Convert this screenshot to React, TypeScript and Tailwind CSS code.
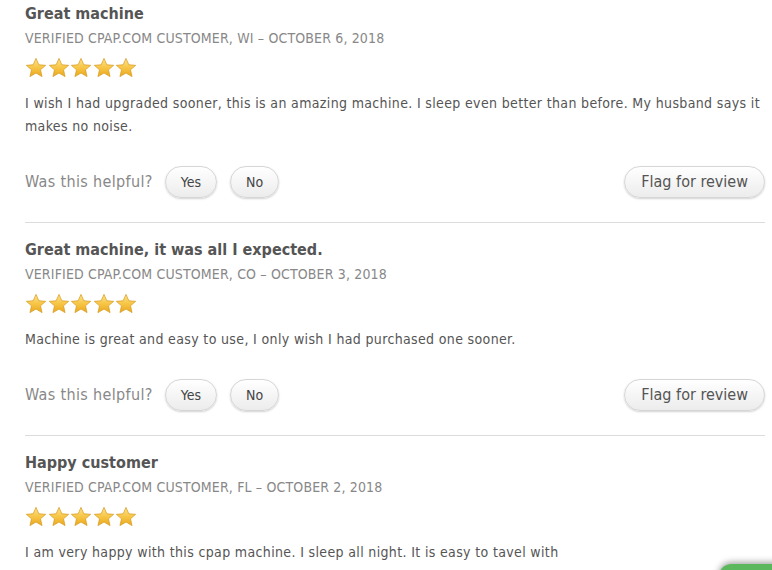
import React from "react";

type Review = {
  title: string;
  state: string;
  date: string;
  body: string;
};

const reviews: Review[] = [
  {
    title: "Great machine",
    state: "WI",
    date: "OCTOBER 6, 2018",
    body: "I wish I had upgraded sooner, this is an amazing machine. I sleep even better than before. My husband says it makes no noise.",
  },
  {
    title: "Great machine, it was all I expected.",
    state: "CO",
    date: "OCTOBER 3, 2018",
    body: "Machine is great and easy to use, I only wish I had purchased one sooner.",
  },
  {
    title: "Happy customer",
    state: "FL",
    date: "OCTOBER 2, 2018",
    body: "I am very happy with this cpap machine. I sleep all night. It is easy to tavel with",
  },
];

function Star() {
  return (
    <svg width="22" height="22" viewBox="0 0 24 24">
      <defs>
        <linearGradient id="starFill" x1="0" y1="0" x2="0" y2="1">
          <stop offset="0" stopColor="#fde58a" />
          <stop offset="0.55" stopColor="#f6c342" />
          <stop offset="1" stopColor="#e9a81c" />
        </linearGradient>
      </defs>
      <path
        d="M12 1.5l3.1 7 7.4.6-5.6 4.9 1.7 7.4L12 17.5l-6.6 3.9 1.7-7.4-5.6-4.9 7.4-.6z"
        fill="url(#starFill)"
        stroke="#d99a1e"
        strokeWidth="0.8"
        strokeLinejoin="round"
      />
    </svg>
  );
}

function PillButton({ children, wide }: { children: React.ReactNode; wide?: boolean }) {
  return (
    <button
      className={
        wide
          ? "h-8 px-4 rounded-full border border-[#d6d6d6] bg-gradient-to-b from-white to-[#ececec] shadow-[0_1px_2px_rgba(0,0,0,0.18)] text-[16px] text-[#555]"
          : "h-8 px-[15px] rounded-full border border-[#d6d6d6] bg-gradient-to-b from-white to-[#ececec] shadow-[0_1px_2px_rgba(0,0,0,0.18)] text-[14px] text-[#444]"
      }
    >
      {children}
    </button>
  );
}

function ReviewItem({ review, last }: { review: Review; last?: boolean }) {
  return (
    <div className={last ? "pt-[3px]" : "pt-[3px] pb-[24px] border-b border-[#dcdcdc]"}>
      <h3 className="text-[16px] font-bold text-[#555] leading-[22px]">{review.title}</h3>
      <p className="text-[14px] text-[#888] leading-[22px] mt-[2px] tracking-[0.15px]">
        VERIFIED CPAP.COM CUSTOMER, {review.state} – {review.date}
      </p>
      <div className="flex mt-[8px] gap-[0.5px]">
        <Star />
        <Star />
        <Star />
        <Star />
        <Star />
      </div>
      <p className="text-[14px] text-[#555] leading-[23px] mt-[13px] tracking-[0.35px]">{review.body}</p>
      {!last && (
        <div className="flex items-center mt-[28px]">
          <span className="text-[16px] text-[#888] mr-3 tracking-[0.35px]">Was this helpful?</span>
          <div className="flex gap-[13px]">
            <PillButton>Yes</PillButton>
            <PillButton>No</PillButton>
          </div>
          <div className="ml-auto">
            <PillButton wide>Flag for review</PillButton>
          </div>
        </div>
      )}
    </div>
  );
}

export default function App() {
  return (
    <div
      className="relative w-[772px] h-[570px] overflow-hidden bg-white"
      style={{ fontFamily: "Tahoma, 'DejaVu Sans Condensed', 'DejaVu Sans', sans-serif" }}
    >
      <div className="w-[740px] ml-[25px] flex flex-col gap-[13px]">
        {reviews.map((r, i) => (
          <ReviewItem key={r.title} review={r} last={i === reviews.length - 1} />
        ))}
      </div>
      <div className="absolute left-[718px] top-[564px] w-[80px] h-[30px] rounded-tl-[14px] bg-[#5cb85c] shadow-[0_-2px_6px_rgba(0,0,0,0.35)]" />
    </div>
  );
}
